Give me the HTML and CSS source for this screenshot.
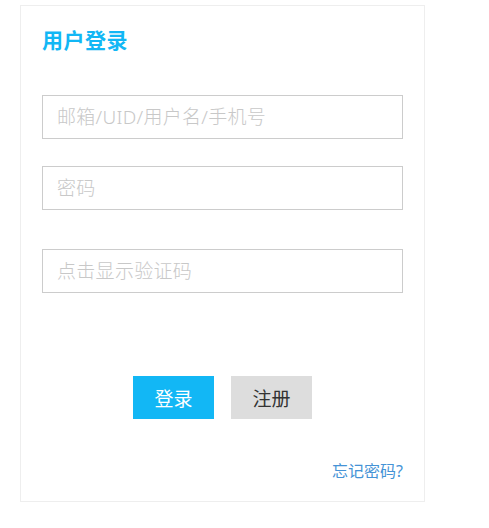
FILE: index.html
```html
<!DOCTYPE html>
<html lang="zh-CN">
<head>
<meta charset="utf-8">
<title>用户登录</title>
<link rel="stylesheet" href="styles.css">
</head>
<body>
<div class="card">
  <h1 class="title">用户登录</h1>
  <form class="form">
    <input class="field field-user" type="text" placeholder="邮箱/UID/用户名/手机号">
    <input class="field field-pass" type="password" placeholder="密码">
    <input class="field field-code" type="text" placeholder="点击显示验证码">
    <div class="actions">
      <button type="button" class="btn btn-primary">登录</button>
      <button type="button" class="btn btn-secondary">注册</button>
    </div>
    <div class="links">
      <a class="forgot" href="#">忘记密码?</a>
    </div>
  </form>
</div>
</body>
</html>
```

FILE: styles.css
```css
* { box-sizing: border-box; }
html, body { margin: 0; padding: 0; background: #fff; }
body {
  font-family: "Noto Sans", "Noto Sans CJK SC", sans-serif;
  color: #333;
}
.card {
  margin: 5px 0 0 20px;
  width: 405px;
  height: 497px;
  border: 1px solid #eeeeee;
  padding: 16px 21px 0 21px;
}
.title {
  margin: 0;
  font-family: "Noto Sans CJK SC", sans-serif;
  font-size: 21px;
  line-height: 34px;
  font-weight: 700;
  color: #12b7f5;
  letter-spacing: 0.5px;
}
.form {
  display: flex;
  flex-direction: column;
  margin-top: 39px;
}
.field {
  display: block;
  width: 361px;
  height: 44px;
  border: 1px solid #cccccc;
  padding: 0 14px;
  font-family: inherit;
  font-size: 19px;
  font-weight: 300;
  letter-spacing: 0.3px;
  color: #333;
  outline: none;
  background: #fff;
}
.field::placeholder { color: #c8c8c8; }
.field-pass { margin-top: 27px; }
.field-code { margin-top: 39px; }
.actions {
  display: flex;
  justify-content: center;
  gap: 17px;
  margin-top: 83px;
}
.btn {
  width: 81px;
  height: 43px;
  border: 0;
  font-family: inherit;
  font-size: 19px;
  cursor: pointer;
  padding: 0;
}
.btn-primary { background: #12b7f5; color: #fff; }
.btn-secondary { background: #dddddd; color: #333; }
.links {
  display: flex;
  justify-content: flex-end;
  margin-top: 40px;
}
.forgot {
  font-size: 16px;
  line-height: 24px;
  color: #4593d6;
  text-decoration: none;
}
```
